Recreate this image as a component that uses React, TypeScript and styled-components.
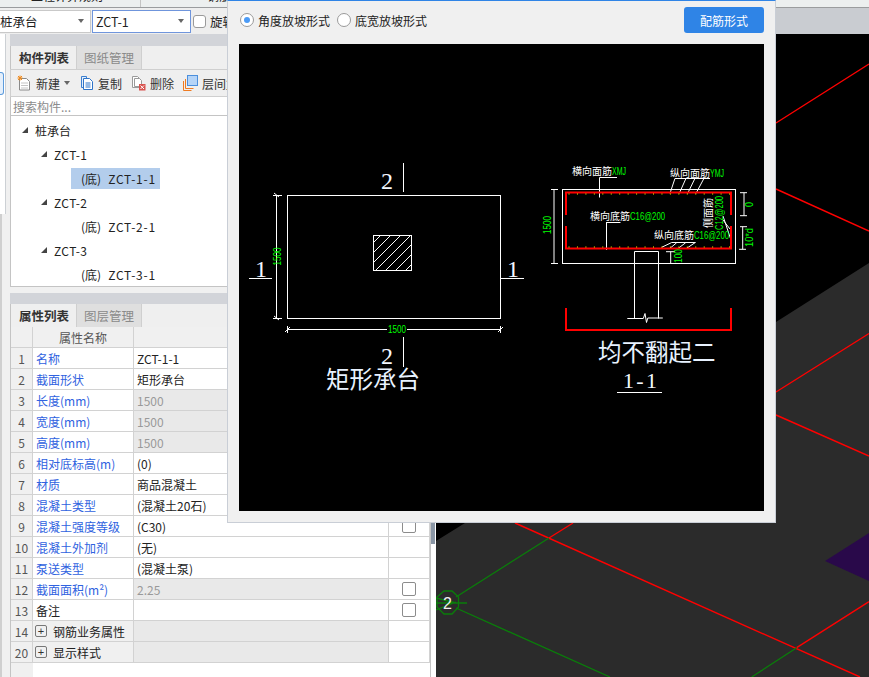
import React from 'react';
import styled, { createGlobalStyle } from 'styled-components';

const UI_FONT = '"Noto Sans CJK SC", "Noto Sans", sans-serif';
const CAD_FONT = '"Liberation Sans", "Noto Sans CJK SC", sans-serif';
const SERIF_FONT = '"Liberation Serif", "Noto Sans CJK SC", serif';

const GlobalStyle = createGlobalStyle`
  html, body {
    margin: 0;
    padding: 0;
    background: #f0f0f0;
  }
  * {
    box-sizing: border-box;
  }
`;

const Page = styled.div`
  position: relative;
  width: 869px;
  height: 677px;
  overflow: hidden;
  display: flex;
  flex-direction: column;
  font-family: ${UI_FONT};
  font-size: 12px;
  color: #222;
`;

const TopStrip = styled.div`
  height: 8px;
  flex: none;
  display: flex;
  align-items: flex-end;
  background: #ecefef;
  border-bottom: 1px solid #9a9c9e;
  overflow: hidden;
`;

const TopTab = styled.div<{ $width: number; $pad: number }>`
  flex: none;
  width: ${p => p.$width}px;
  height: 7px;
  padding-left: ${p => p.$pad}px;
  line-height: 17px;
  border-right: 1px solid #c4c4c4;
  font-size: 12px;
  white-space: nowrap;
  display: flex;
  align-items: flex-end;
  padding-bottom: 3px;
`;

const HeaderRow = styled.div`
  height: 26px;
  flex: none;
  display: flex;
`;

const ComboBar = styled.div`
  width: 436px;
  display: flex;
  align-items: center;
  gap: 1px;
  margin-left: -1px;
  background: #eeeeee;
`;

const Combo = styled.div<{ $width: number; $active?: boolean }>`
  width: ${p => p.$width}px;
  height: 23px;
  display: flex;
  align-items: center;
  justify-content: space-between;
  padding: 0 6px 0 ${p => (p.$active ? 3 : 0)}px;
  background: #fff;
  border: 1px solid ${p => (p.$active ? '#6f95dc' : '#c9c9c9')};
  font-size: 12.5px;
  color: #222;
`;

const Caret = styled.span`
  width: 0;
  height: 0;
  border-left: 3px solid transparent;
  border-right: 3px solid transparent;
  border-top: 4px solid #666;
`;

const ComboCheck = styled.span`
  width: 13px;
  height: 13px;
  margin-left: 1px;
  background: #fff;
  border: 1px solid #9a9a9a;
  border-radius: 3px;
`;

const ComboLabel = styled.span`
  margin-left: 3px;
  font-size: 12.5px;
`;

const GreyStrip = styled.div`
  flex: 1;
  background: #c9ccd1;
`;

const Main = styled.div`
  flex: 1;
  display: flex;
  min-height: 0;
`;

const Rail = styled.div`
  width: 10px;
  flex: none;
  display: flex;
  flex-direction: column;
`;

const RailTop = styled.div`
  height: 180px;
  flex: none;
  padding-top: 38px;
  width: 6px;
  background: #fff;
  border-right: 1px solid #ccd0d4;
`;

const RailMark = styled.div`
  width: 4px;
  height: 23px;
  background: #e4effb;
  border: 1px solid #5c9bdc;
  border-left: none;
  border-radius: 0 3px 3px 0;
`;

const RailBottom = styled.div`
  flex: 1;
  border-left: 2px solid #cfcfcf;
`;

const Side = styled.div`
  width: 426px;
  flex: none;
  display: flex;
  flex-direction: column;
  background: #f0f0f0;
`;

const GripBar = styled.div<{ $height: number }>`
  height: ${p => p.$height}px;
  flex: none;
  margin-right: 5px;
  background: #d2d4d9;
`;

const TabRow = styled.div`
  height: 23px;
  flex: none;
  display: flex;
  margin-right: 5px;
  padding-left: 1px;
  background: #efefef;
  border-left: 1px solid #c4c4c4;
`;

const Tab = styled.div<{ $active?: boolean }>`
  width: 65px;
  height: 23px;
  display: flex;
  align-items: center;
  justify-content: center;
  font-size: 12.5px;
  font-weight: ${p => (p.$active ? 700 : 400)};
  color: ${p => (p.$active ? '#333' : '#8a8a8a')};
  background: ${p => (p.$active ? '#efefef' : '#dfdfdf')};
  border-right: 1px solid #cfcfcf;
`;

const ToolRow = styled.div`
  height: 28px;
  flex: none;
  display: flex;
  align-items: center;
  padding-left: 6px;
  margin-right: 5px;
  background: #efefef;
  border: 1px solid #cfcfcf;
  border-width: 1px 0 1px 1px;
  white-space: nowrap;
`;

const Tool = styled.div<{ $width: number }>`
  flex: none;
  width: ${p => p.$width}px;
  display: flex;
  align-items: center;
  gap: 4px;
  color: #333;
  svg {
    flex: none;
  }
`;

const SearchBox = styled.div`
  height: 18px;
  flex: none;
  margin-right: 5px;
  padding-left: 2px;
  line-height: 19px;
  background: #fff;
  color: #8c8c8c;
  border-left: 1px solid #c4c4c4;
`;

const Tree = styled.div`
  height: 172px;
  flex: none;
  margin-right: 5px;
  padding-top: 2px;
  background: #fff;
  border: 1px solid #c4c4c4;
  border-width: 1px 0 1px 1px;
`;

const TreeRow = styled.div<{ $indent: number; $latin?: boolean }>`
  height: 24px;
  display: flex;
  align-items: center;
  padding-left: ${p => p.$indent}px;
  color: #222;
  white-space: nowrap;
  letter-spacing: ${p => (p.$latin ? '0.4px' : '0')};
`;

const TreeArrow = styled.span`
  width: 0;
  height: 0;
  margin-right: 7px;
  border-bottom: 6px solid #444;
  border-left: 6px solid transparent;
`;

const LeafLabel = styled.span<{ $selected?: boolean }>`
  width: 89px;
  height: 21px;
  display: flex;
  align-items: center;
  gap: 7px;
  padding-left: 10px;
  background: ${p => (p.$selected ? '#b3cdec' : 'transparent')};
`;

const LeafCode = styled.span`
  letter-spacing: 0.8px;
`;

const Gap = styled.div`
  height: 6px;
  flex: none;
`;

const TableWrap = styled.div`
  flex: 1;
  display: flex;
  min-height: 0;
`;

const PropsPanel = styled.div`
  width: 421px;
  flex: none;
  display: flex;
  flex-direction: column;
  background: linear-gradient(to right, #f0f0f0 22px, #fff 22px);
  border-left: 1px solid #c4c4c4;
  border-right: 1px solid #c4c4c4;
`;

const ScrollTrack = styled.div`
  width: 5px;
  flex: none;
  background: #fff;
`;

const ScrollThumb = styled.div`
  width: 4px;
  height: 217px;
  background: #8a96a5;
`;

const PropsGrid = styled.div`
  display: grid;
  grid-template-columns: 22px 101px 255px 41px;
  grid-auto-rows: 21px;
`;

const Cell = styled.div<{ $shade?: boolean }>`
  display: flex;
  align-items: center;
  padding-left: 3px;
  border-right: 1px solid #d2d2d2;
  border-bottom: 1px solid #d2d2d2;
  background: ${p => (p.$shade ? '#e9e9e9' : '#fff')};
  white-space: nowrap;
  overflow: hidden;
`;

const NumCell = styled(Cell)`
  justify-content: center;
  padding-left: 0;
  color: #555;
  background: #f0f0f0;
`;

const HeadCell = styled(Cell)`
  justify-content: center;
  padding-left: 0;
  color: #555;
  background: #f0f0f0;
`;

const NameCell = styled(Cell)<{ $link?: boolean; $group?: boolean }>`
  color: ${p => (p.$link ? '#2f62e0' : '#222')};
  background: ${p => (p.$group ? '#f0f0f0' : '#fff')};
`;

const ValueCell = styled(Cell)<{ $muted?: boolean }>`
  color: ${p => (p.$muted ? '#999' : '#222')};
`;

const CheckCell = styled(Cell)`
  justify-content: center;
  padding-left: 0;
`;

const CheckBox = styled.span`
  width: 14px;
  height: 14px;
  background: #fff;
  border: 1px solid #8c8c8c;
  border-radius: 2px;
`;

const Expander = styled.span`
  width: 12px;
  height: 12px;
  margin: 0 6px 0 -1px;
  display: flex;
  align-items: center;
  justify-content: center;
  border: 1px solid #777;
  border-radius: 2px;
  font-family: "Liberation Sans", sans-serif;
  font-size: 11px;
  line-height: 1;
  color: #333;
`;

const Canvas = styled.div`
  flex: 1;
  min-width: 0;
  background: #000;
`;

const FullSvg = styled.svg`
  display: block;
  width: 100%;
  height: 100%;
`;

const Dialog = styled.div`
  position: absolute;
  left: 227px;
  top: 0;
  width: 549px;
  height: 523px;
  display: flex;
  flex-direction: column;
  padding: 0 11px 11px 11px;
  background: #f0f0f0;
  border: 1px solid #c9ced6;
  border-top: 1px solid #2f84e6;
`;

const DialogHead = styled.div`
  height: 43px;
  flex: none;
  display: flex;
  align-items: center;
  padding: 0 0 5px 1px;
`;

const RadioItem = styled.label`
  display: flex;
  align-items: center;
  gap: 4px;
  margin-right: 7px;
  color: #222;
`;

const RadioDot = styled.span<{ $checked?: boolean }>`
  width: 14px;
  height: 14px;
  display: flex;
  align-items: center;
  justify-content: center;
  background: #fff;
  border: 1px solid #9a9a9a;
  border-radius: 50%;
  &::after {
    content: '';
    width: 6px;
    height: 6px;
    border-radius: 50%;
    background: ${p => (p.$checked ? '#4b9bf6' : 'transparent')};
  }
`;

const RebarButton = styled.button`
  width: 80px;
  height: 26px;
  margin-left: auto;
  padding: 0;
  background: #2f84e6;
  border: none;
  border-radius: 3px;
  color: #fff;
  font-family: ${UI_FONT};
  font-size: 12px;
`;

const Preview = styled.div`
  flex: 1;
  min-height: 0;
  background: #000;
`;

const CadText = styled.text<{ $size: number; $fill?: string; $font?: string }>`
  font-family: ${p => p.$font ?? UI_FONT};
  font-size: ${p => p.$size}px;
  fill: ${p => p.$fill ?? '#fff'};
`;

const TREE = [
  { label: '桩承台', indent: 11, arrow: true },
  { label: 'ZCT-1', indent: 30, arrow: true, latin: true },
  { leaf: 'ZCT-1-1', selected: true },
  { label: 'ZCT-2', indent: 30, arrow: true, latin: true },
  { leaf: 'ZCT-2-1' },
  { label: 'ZCT-3', indent: 30, arrow: true, latin: true },
  { leaf: 'ZCT-3-1' },
];

type Row = {
  num: number;
  name: string;
  value?: string;
  link?: boolean;
  muted?: boolean;
  check?: boolean;
  group?: boolean;
};

const ROWS: Row[] = [
  { num: 1, name: '名称', value: 'ZCT-1-1', link: true },
  { num: 2, name: '截面形状', value: '矩形承台', link: true },
  { num: 3, name: '长度(mm)', value: '1500', link: true, muted: true },
  { num: 4, name: '宽度(mm)', value: '1500', link: true, muted: true },
  { num: 5, name: '高度(mm)', value: '1500', link: true, muted: true },
  { num: 6, name: '相对底标高(m)', value: '(0)', link: true },
  { num: 7, name: '材质', value: '商品混凝土', link: true },
  { num: 8, name: '混凝土类型', value: '(混凝土20石)', link: true },
  { num: 9, name: '混凝土强度等级', value: '(C30)', link: true, check: true },
  { num: 10, name: '混凝土外加剂', value: '(无)', link: true },
  { num: 11, name: '泵送类型', value: '(混凝土泵)', link: true },
  { num: 12, name: '截面面积(m²)', value: '2.25', link: true, muted: true, check: true },
  { num: 13, name: '备注', check: true },
  { num: 14, name: '钢筋业务属性', group: true },
  { num: 20, name: '显示样式', group: true },
];

function NewIcon() {
  return (
    <svg width="15" height="16" viewBox="0 0 15 16">
      <path d="M2.5 3.5h7l3 3v8.5h-10z" fill="#fff" stroke="#8a8a8a" />
      <path d="M4 8h7M4 10.500h7M4 13h7" stroke="#c4c4c4" />
      <path d="M1 1l4 4M5 1L1 5M3 .5v5M.5 3h5" stroke="#f08a1c" strokeWidth="1" />
    </svg>
  );
}

function CopyIcon() {
  return (
    <svg width="14" height="16" viewBox="0 0 14 16">
      <path d="M1.500 1.500h5v11h-5z" fill="#e6f0fb" stroke="#3c7fd0" />
      <path d="M3.500 3.500h6l3 3v8h-9z" fill="#fff" stroke="#2f74c8" />
      <path d="M5.500 8h5M5.500 10h5M5.500 12h5" stroke="#2f74c8" />
    </svg>
  );
}

function DeleteIcon() {
  return (
    <svg width="15" height="16" viewBox="0 0 15 16">
      <path d="M1.500 1.500h5l2 2v9h-7z" fill="#fff" stroke="#9a9a9a" />
      <path d="M3.500 3.500h5l2 2v6h-7z" fill="#fff" stroke="#9a9a9a" />
      <rect x="8" y="9" width="6.500" height="6.500" fill="#d9534f" />
      <path d="M9.500 10.500l3.500 3.500M13 10.500L9.500 14" stroke="#fff" />
    </svg>
  );
}

function FloorIcon() {
  return (
    <svg width="15" height="16" viewBox="0 0 15 16">
      <path d="M.5 6v9.500h8" fill="none" stroke="#ee7b22" />
      <path d="M2.500 4v9.500h8" fill="none" stroke="#ee7b22" />
      <rect x="4.500" y=".5" width="10" height="10" fill="#b5d4f7" stroke="#4c8fdc" />
    </svg>
  );
}

function SceneCanvas() {
  return (
    <FullSvg viewBox="436 34 433 643">
      <rect x="436" y="34" width="433" height="643" fill="#000" />
      <polygon points="436,541 465,523 776,322 869,263 869,677 436,677" fill="#2b2b2b" />
      <polygon points="825,561 869,533 869,581" fill="#29094a" />
      <g stroke="#f00" strokeWidth="1.400" fill="none">
        <path d="M776 123L869 64M776 189L869 231M776 392L869 333.500M776 415L869 456" />
        <path d="M515 523L860 677M869 601.700L796.700 647.700M573 523L549 538" />
      </g>
      <g stroke="#0a7d0a" strokeWidth="1.300" fill="none">
        <path d="M796.700 647.700L751.700 677M549 538L456 597M456 608L610 677" />
        <path d="M444 591h8l6.500 6v10l-6.500 7h-8l-7-7v-10z" />
        <path d="M436 603H467M436 598l20 5M436 610l20-8" />
      </g>
      <CadText x="443" y="609" $size={16} $font={CAD_FONT} $fill="#eee">
        2
      </CadText>
    </FullSvg>
  );
}

// green dimension text, squeezed to the width it has in the drawing
function DimText({ x, y, len, up, size = 10, children }: { x: number; y: number; len: number; up?: boolean; size?: number; children: string }) {
  return (
    <CadText
      transform={`translate(${x} ${y})${up ? ' rotate(-90)' : ''}`}
      $size={size}
      $font={CAD_FONT}
      $fill="#0f0"
      textLength={len}
      lengthAdjust="spacingAndGlyphs"
    >
      {children}
    </CadText>
  );
}

function RebarNote({ x, y, label, code, codeLen }: { x: number; y: number; label: string; code: string; codeLen: number }) {
  return (
    <>
      <CadText x={x} y={y} $size={10}>{label}</CadText>
      <DimText x={x + 40} y={y} len={codeLen}>{code}</DimText>
    </>
  );
}

function PlanDrawing() {
  const hatch = [616, 626, 636, 646, 656, 666, 676];
  return (
    <g>
      <g stroke="#fff" strokeWidth="1" fill="none">
        <rect x="287.500" y="195.500" width="213" height="123" />
        <rect x="373.500" y="235.500" width="38" height="35" />
        {hatch.map(c => (
          <path key={c} d={`M${Math.max(373.5, c - 270.5)} ${Math.min(270.5, c - 373.5)}L${Math.min(411.5, c - 235.5)} ${Math.max(235.5, c - 411.5)}`} />
        ))}
        <path d="M403.500 163v29M403.500 337v30M249 278.500h23M500 278.500h24" />
        <path d="M276.500 195v123M273 195.500h9M273 318.500h9M274 193l5 4M274 316l5 4" />
        <path d="M287 329.500h100M407 329.500h93M287.500 326v7M500.500 326v7M285 332l5-5M498 332l5-5" />
      </g>
      <CadText x="381" y="189" $size={24} $font={SERIF_FONT} $fill="#f4f8ff">2</CadText>
      <CadText x="381" y="364" $size={24} $font={SERIF_FONT} $fill="#f4f8ff">2</CadText>
      <CadText x="255" y="277" $size={24} $font={SERIF_FONT} $fill="#f4f8ff">1</CadText>
      <CadText x="507" y="277" $size={24} $font={SERIF_FONT} $fill="#f4f8ff">1</CadText>
      <DimText x={388} y={333} len={18}>1500</DimText>
      <DimText x={280.500} y={265.500} len={18} up>1500</DimText>
      <CadText x="326" y="388" $size={23.500} $fill="#e8f2ff">矩形承台</CadText>
    </g>
  );
}

function SectionDrawing() {
  const dots = Array.from({ length: 20 }, (_, i) => 568.5 + i * 8.45);
  return (
    <g>
      <g stroke="#fff" strokeWidth="1" fill="none">
        <rect x="562.500" y="189.500" width="173" height="74" />
        <path d="M554 189v74M551 189.500h7M551 263.500h7" />
        <path d="M617 177.500h-17.500v20M606.500 222v28M606.500 222.500h14" />
        <path d="M675 178.500h35M675 178.300l-5 15M686 178.300l-6.700 15M695 178.300l-7.300 15M704 178.300l-8 15" />
        <path d="M671.700 242.500h24M661.700 247.300l10-4.800M670 248.300l6.700-5.600M678.300 248.300l7.400-5.600M686.700 248.300l8.300-5.600" />
        <path d="M723 216l8 24M723 220l7 9" />
        <path d="M740 192.700h7M744 192.700v23M740 215.700h7M740 226.700h7M742.700 226.700v22.600M739 249.300h7" />
        <path d="M666 251.700h9M670.700 251.700v11.600" />
        <path d="M634.500 251.500h24M634.500 251.500v67M658.500 251.500v67" />
        <path d="M627.300 318.500h16l1.700-5 1.500 9 1.300-4.500h15" />
        <path d="M617 392.500h45" />
      </g>
      <g stroke="#f00" strokeWidth="2" fill="none">
        <path d="M566 215v-22.500h165V215M566 226v22.500h165V226M566 308v22h165v-22" />
      </g>
      <g fill="#ff0">
        {dots.map(x => (
          <React.Fragment key={x}>
            <rect x={x} y="193.500" width="1" height="1" />
            <rect x={x} y="246.500" width="1" height="1" />
          </React.Fragment>
        ))}
      </g>
      <RebarNote x={572} y={175} label="横向面筋" code="XMJ" codeLen={14} />
      <RebarNote x={670} y={176.500} label="纵向面筋" code="YMJ" codeLen={14} />
      <RebarNote x={590} y={220} label="横向底筋" code="C16@200" codeLen={35} />
      <RebarNote x={654} y={239} label="纵向底筋" code="C16@200" codeLen={35} />
      <CadText transform="translate(712 228) rotate(-90)" $size={10}>侧面筋</CadText>
      <DimText x={722.500} y={230} len={34} up>C12@200</DimText>
      <DimText x={551} y={234} len={18} up>1500</DimText>
      <DimText x={753} y={207} len={5} up>0</DimText>
      <DimText x={753} y={247} len={19} up>10*d</DimText>
      <DimText x={682} y={263} len={14} up>100</DimText>
      <CadText x="598" y="361" $size={23.500} $fill="#e8f2ff">均不翻起二</CadText>
      <CadText x="623" y="388" $size={22} $font={SERIF_FONT} $fill="#f4f8ff" textLength={34}>1-1</CadText>
    </g>
  );
}

function App() {
  return (
    <Page>
      <GlobalStyle />
      <TopStrip>
        <TopTab $width={141} $pad={31}>工程计算规则</TopTab>
        <TopTab $width={120} $pad={66}>钢筋</TopTab>
      </TopStrip>
      <HeaderRow>
        <ComboBar>
          <Combo $width={92}>
            桩承台
            <Caret />
          </Combo>
          <Combo $width={99} $active>
            ZCT-1
            <Caret />
          </Combo>
          <ComboCheck />
          <ComboLabel>旋转</ComboLabel>
        </ComboBar>
        <GreyStrip />
      </HeaderRow>
      <Main>
        <Rail>
          <RailTop>
            <RailMark />
          </RailTop>
          <RailBottom />
        </Rail>
        <Side>
          <GripBar $height={12} />
          <TabRow>
            <Tab $active>构件列表</Tab>
            <Tab>图纸管理</Tab>
          </TabRow>
          <ToolRow>
            <Tool $width={63}>
              <NewIcon />
              新建
              <Caret />
            </Tool>
            <Tool $width={51}>
              <CopyIcon />
              复制
            </Tool>
            <Tool $width={52}>
              <DeleteIcon />
              删除
            </Tool>
            <Tool $width={80}>
              <FloorIcon />
              层间复制
            </Tool>
          </ToolRow>
          <SearchBox>搜索构件...</SearchBox>
          <Tree>
            {TREE.map((item, i) =>
              item.leaf ? (
                <TreeRow key={i} $indent={60}>
                  <LeafLabel $selected={item.selected}>
                    <span>(底)</span>
                    <LeafCode>{item.leaf}</LeafCode>
                  </LeafLabel>
                </TreeRow>
              ) : (
                <TreeRow key={i} $indent={item.indent ?? 0} $latin={item.latin}>
                  <TreeArrow />
                  {item.label}
                </TreeRow>
              ),
            )}
          </Tree>
          <Gap />
          <GripBar $height={11} />
          <TabRow>
            <Tab $active>属性列表</Tab>
            <Tab>图层管理</Tab>
          </TabRow>
          <TableWrap>
            <PropsPanel>
              <PropsGrid>
                <HeadCell />
                <HeadCell>属性名称</HeadCell>
                <HeadCell />
                <HeadCell />
                {ROWS.map(row => (
                  <React.Fragment key={row.num}>
                    <NumCell>{row.num}</NumCell>
                    <NameCell $link={row.link} $group={row.group}>
                      {row.group && <Expander>+</Expander>}
                      {row.name}
                    </NameCell>
                    <ValueCell $muted={row.muted} $shade={row.muted || row.group}>
                      {row.value}
                    </ValueCell>
                    <CheckCell>{row.check && <CheckBox />}</CheckCell>
                  </React.Fragment>
                ))}
              </PropsGrid>
            </PropsPanel>
            <ScrollTrack>
              <ScrollThumb />
            </ScrollTrack>
          </TableWrap>
        </Side>
        <Canvas>
          <SceneCanvas />
        </Canvas>
      </Main>
      <Dialog>
        <DialogHead>
          <RadioItem>
            <RadioDot $checked />
            角度放坡形式
          </RadioItem>
          <RadioItem>
            <RadioDot />
            底宽放坡形式
          </RadioItem>
          <RebarButton>配筋形式</RebarButton>
        </DialogHead>
        <Preview>
          <FullSvg viewBox="239 44 525 467">
            <PlanDrawing />
            <SectionDrawing />
          </FullSvg>
        </Preview>
      </Dialog>
    </Page>
  );
}

export default App;
